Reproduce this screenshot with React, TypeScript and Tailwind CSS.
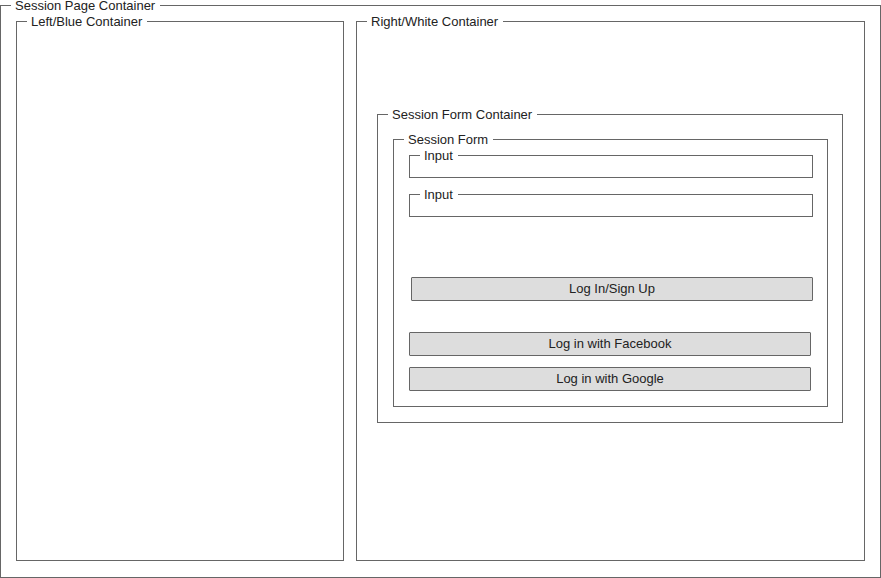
import React from "react";

const Legend = ({ children }: { children: React.ReactNode }) => (
  <legend className="ml-[10px] pl-[4px] pr-[5px] text-[13px] leading-[11px] text-[#222]">{children}</legend>
);

const Btn = ({ children, className }: { children: React.ReactNode; className: string }) => (
  <div
    className={
      "h-[24px] w-[402px] border border-[#666] rounded-[1px] bg-[#dddddd] flex items-center justify-center text-[13px] text-[#222] " +
      className
    }
  >
    {children}
  </div>
);

export default function App() {
  return (
    <div className="w-[881px] h-[578px] bg-white" style={{ fontFamily: '"Liberation Sans", Arial, sans-serif' }}>
      <fieldset className="w-[881px] border border-[#666]">
        <Legend>Session Page Container</Legend>
        <div className="pt-[5px] px-[15px] pb-[16px] flex gap-[12px]">
          <fieldset className="w-[328px] h-[545px] border border-[#666]">
            <Legend>Left/Blue Container</Legend>
          </fieldset>
          <fieldset className="w-[509px] h-[545px] border border-[#666]">
            <Legend>Right/White Container</Legend>
            <div className="pt-[82px] pl-[20px]">
              <fieldset className="w-[466px] border border-[#666]">
                <Legend>Session Form Container</Legend>
                <div className="pt-[14px] pl-[15px] pb-[15px]">
                  <fieldset className="w-[435px] border border-[#666]">
                    <Legend>Session Form</Legend>
                    <div className="pt-[5px] pl-[15px] pb-[15px] flex flex-col">
                      <fieldset className="w-[404px] h-[28px] border border-[#666]">
                        <Legend>Input</Legend>
                      </fieldset>
                      <fieldset className="mt-[11px] w-[404px] h-[28px] border border-[#666]">
                        <Legend>Input</Legend>
                      </fieldset>
                      <Btn className="mt-[60px] ml-[2px]">Log In/Sign Up</Btn>
                      <Btn className="mt-[31px]">Log in with Facebook</Btn>
                      <Btn className="mt-[11px]">Log in with Google</Btn>
                    </div>
                  </fieldset>
                </div>
              </fieldset>
            </div>
          </fieldset>
        </div>
      </fieldset>
    </div>
  );
}
